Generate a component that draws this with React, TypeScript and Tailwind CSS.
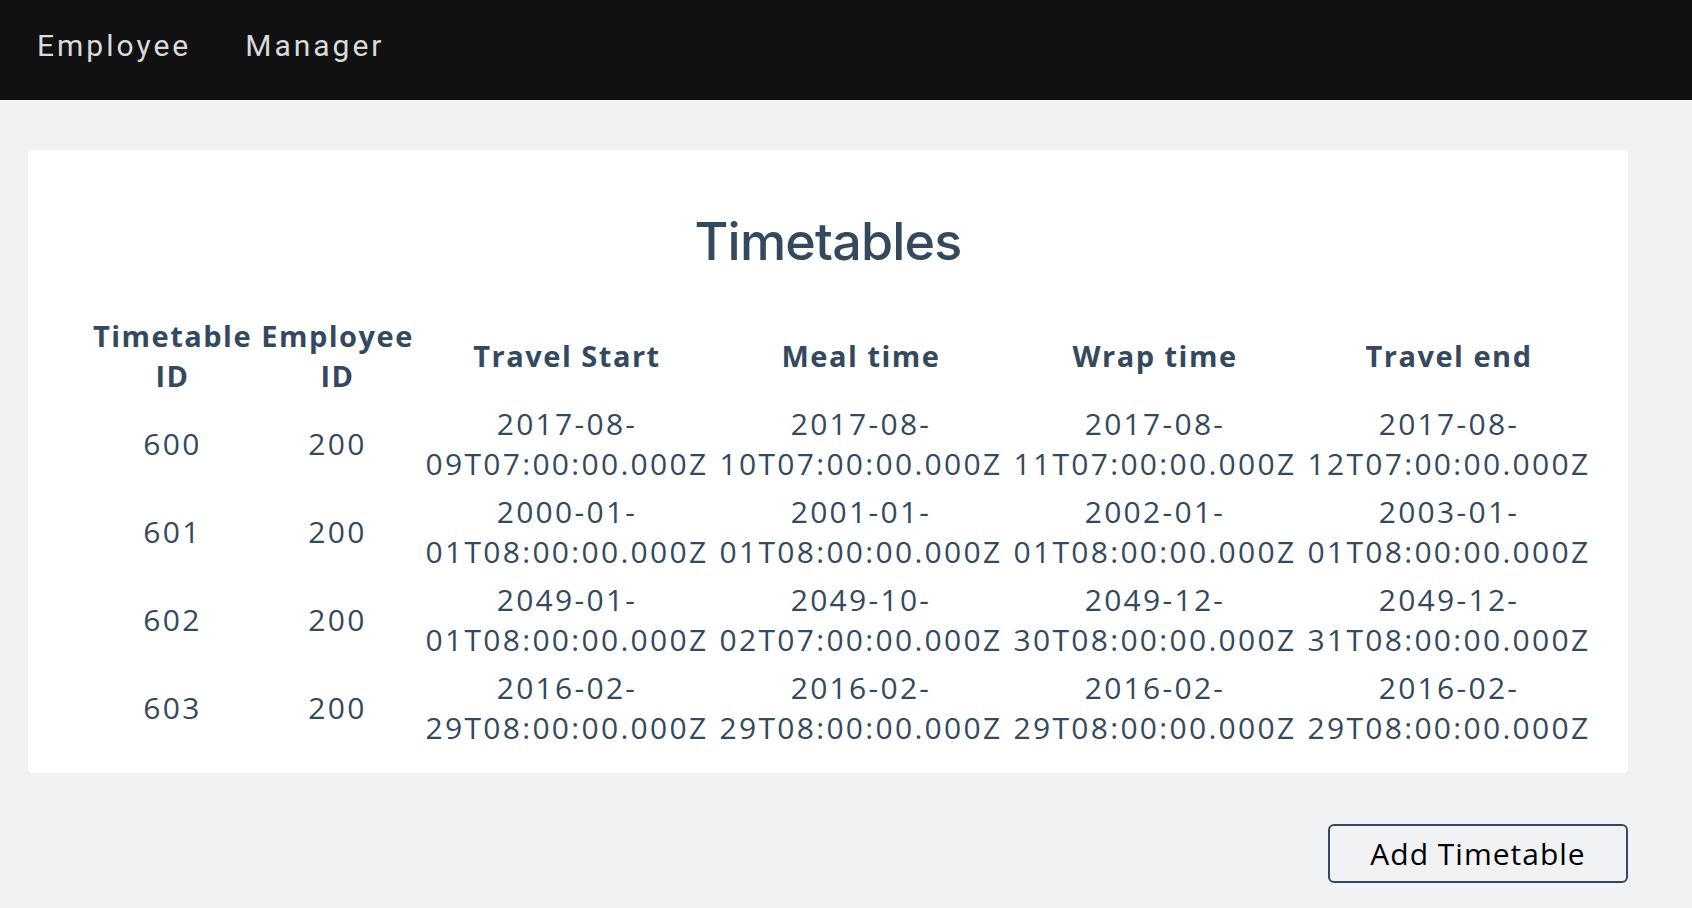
import React from "react";

const rows = [
  { id: "600", emp: "200", d: [["2017-08-", "09T07:00:00.000Z"], ["2017-08-", "10T07:00:00.000Z"], ["2017-08-", "11T07:00:00.000Z"], ["2017-08-", "12T07:00:00.000Z"]] },
  { id: "601", emp: "200", d: [["2000-01-", "01T08:00:00.000Z"], ["2001-01-", "01T08:00:00.000Z"], ["2002-01-", "01T08:00:00.000Z"], ["2003-01-", "01T08:00:00.000Z"]] },
  { id: "602", emp: "200", d: [["2049-01-", "01T08:00:00.000Z"], ["2049-10-", "02T07:00:00.000Z"], ["2049-12-", "30T08:00:00.000Z"], ["2049-12-", "31T08:00:00.000Z"]] },
  { id: "603", emp: "200", d: [["2016-02-", "29T08:00:00.000Z"], ["2016-02-", "29T08:00:00.000Z"], ["2016-02-", "29T08:00:00.000Z"], ["2016-02-", "29T08:00:00.000Z"]] },
];

export default function App() {
  return (
    <div className="min-h-[908px] w-[1692px] bg-[#f1f2f4]">
      <nav className="flex h-[100px] items-start gap-[54px] bg-[#111111] pl-[37px] pt-[28px] font-['Roboto',sans-serif] text-[30px] leading-[36px] tracking-[3px] text-[#d9dadc]">
        <span>Employee</span>
        <span>Manager</span>
      </nav>
      <main className="px-[28px] pt-[50px]">
        <div className="h-[623px] w-[1600px] rounded-[4px] bg-white pt-[60px] text-[#34495e]">
          <h1 className="text-center font-['Inter',sans-serif] text-[52px] font-medium leading-[64px] tracking-[-0.8px]">
            Timetables
          </h1>
          <table className="ml-[62px] mt-[38px] table-fixed border-collapse font-['Open_Sans',sans-serif] text-[30px] font-medium leading-[40px] tracking-[2.3px]">
            <thead>
              <tr className="font-bold text-[29px] tracking-[1.5px]">
                <th className="w-[165px] whitespace-nowrap py-[4px] text-center align-middle">Timetable<br />ID</th>
                <th className="w-[165px] whitespace-nowrap py-[4px] text-center align-middle">Employee<br />ID</th>
                <th className="w-[294px] whitespace-nowrap py-[4px] text-center align-middle">Travel Start</th>
                <th className="w-[294px] whitespace-nowrap py-[4px] text-center align-middle">Meal time</th>
                <th className="w-[294px] whitespace-nowrap py-[4px] text-center align-middle">Wrap time</th>
                <th className="w-[294px] whitespace-nowrap py-[4px] text-center align-middle">Travel end</th>
              </tr>
            </thead>
            <tbody>
              {rows.map((r) => (
                <tr key={r.id}>
                  <td className="whitespace-nowrap py-[4px] text-center align-middle">{r.id}</td>
                  <td className="whitespace-nowrap py-[4px] text-center align-middle">{r.emp}</td>
                  {r.d.map((x, i) => (
                    <td key={i} className="whitespace-nowrap py-[4px] text-center align-middle">
                      {x[0]}
                      <br />
                      {x[1]}
                    </td>
                  ))}
                </tr>
              ))}
            </tbody>
          </table>
        </div>
        <div className="mt-[51px] flex w-[1600px] justify-end">
          <button className="h-[59px] w-[300px] rounded-[6px] border-2 border-[#34495e] bg-transparent font-['Open_Sans',sans-serif] text-[30px] tracking-[1px] text-black">
            Add Timetable
          </button>
        </div>
      </main>
    </div>
  );
}
